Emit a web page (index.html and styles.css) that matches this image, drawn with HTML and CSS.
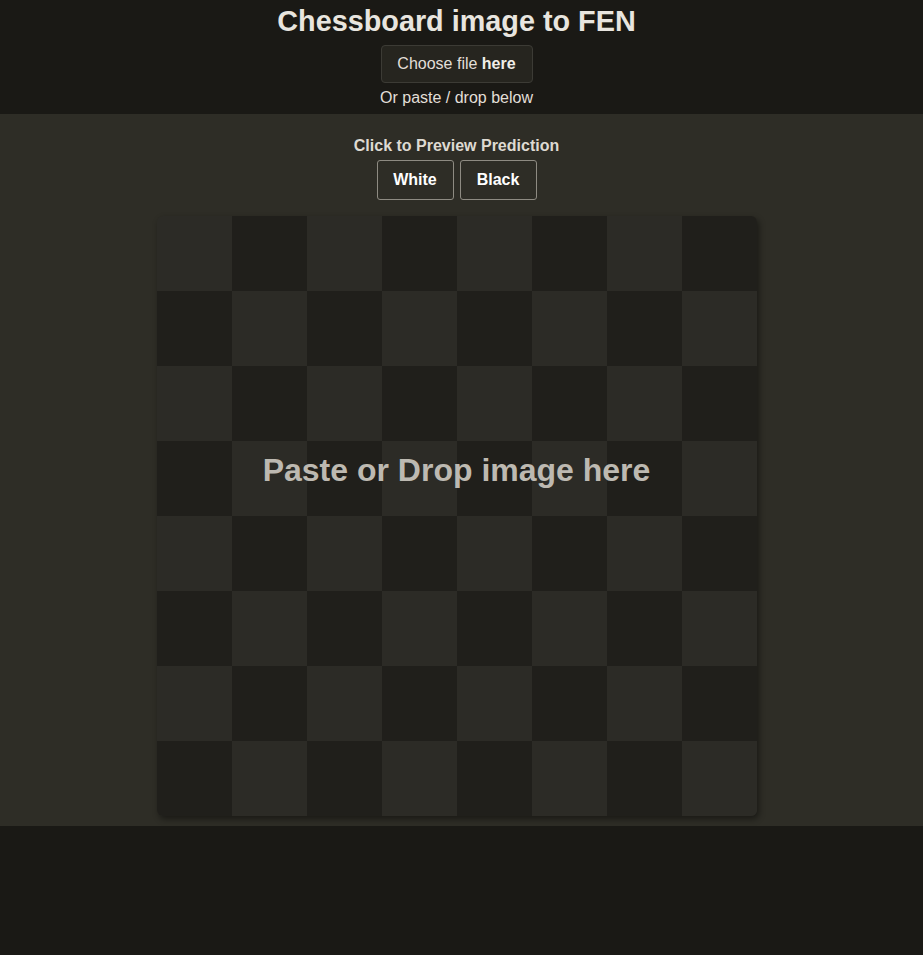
FILE: index.html
```html
<!DOCTYPE html>
<html>
<head>
<meta charset="utf-8">
<link rel="stylesheet" href="styles.css">
</head>
<body>
<header class="top">
  <h1 class="title">Chessboard image to FEN</h1>
  <button class="choose">Choose file <b>here</b></button>
  <div class="hint">Or paste / drop below</div>
</header>
<section class="main">
  <div class="preview-label">Click to Preview Prediction</div>
  <div class="side-buttons">
    <button class="side">White</button>
    <button class="side">Black</button>
  </div>
  <div class="board">
    <div class="sq l"></div><div class="sq d"></div><div class="sq l"></div><div class="sq d"></div><div class="sq l"></div><div class="sq d"></div><div class="sq l"></div><div class="sq d"></div>
    <div class="sq d"></div><div class="sq l"></div><div class="sq d"></div><div class="sq l"></div><div class="sq d"></div><div class="sq l"></div><div class="sq d"></div><div class="sq l"></div>
    <div class="sq l"></div><div class="sq d"></div><div class="sq l"></div><div class="sq d"></div><div class="sq l"></div><div class="sq d"></div><div class="sq l"></div><div class="sq d"></div>
    <div class="sq d"></div><div class="sq l"></div><div class="sq d"></div><div class="sq l"></div><div class="sq d"></div><div class="sq l"></div><div class="sq d"></div><div class="sq l"></div>
    <div class="sq l"></div><div class="sq d"></div><div class="sq l"></div><div class="sq d"></div><div class="sq l"></div><div class="sq d"></div><div class="sq l"></div><div class="sq d"></div>
    <div class="sq d"></div><div class="sq l"></div><div class="sq d"></div><div class="sq l"></div><div class="sq d"></div><div class="sq l"></div><div class="sq d"></div><div class="sq l"></div>
    <div class="sq l"></div><div class="sq d"></div><div class="sq l"></div><div class="sq d"></div><div class="sq l"></div><div class="sq d"></div><div class="sq l"></div><div class="sq d"></div>
    <div class="sq d"></div><div class="sq l"></div><div class="sq d"></div><div class="sq l"></div><div class="sq d"></div><div class="sq l"></div><div class="sq d"></div><div class="sq l"></div>
    <div class="drop-text">Paste or Drop image here</div>
  </div>
</section>
</body>
</html>
```

FILE: styles.css
```css
html, body {
  margin: 0;
  padding: 0;
  background: #1a1915;
  font-family: "Liberation Sans", Arial, sans-serif;
  color: #e6e3dc;
}
.top {
  display: flex;
  flex-direction: column;
  align-items: center;
  padding: 5px 10px 7px 0;
}
.title {
  margin: 0;
  font-size: 28.8px;
  line-height: 33px;
  font-weight: bold;
  color: #e8e5df;
}
.choose {
  margin-top: 7px;
  width: 152px;
  height: 38px;
  background: #26251f;
  border: 1px solid #3c3b35;
  border-radius: 4px;
  color: #e2dfd8;
  font-family: inherit;
  font-size: 16px;
  padding: 0;
}
.choose b { color: #f0eee8; }
.hint {
  margin-top: 6px;
  font-size: 16px;
  line-height: 18px;
  color: #e2dfd8;
}
.main {
  background: #2e2d26;
  display: flex;
  flex-direction: column;
  align-items: center;
  padding: 23px 10px 10px 0;
}
.preview-label {
  font-size: 16px;
  line-height: 18px;
  font-weight: bold;
  color: #dedad2;
}
.side-buttons {
  display: flex;
  gap: 6px;
  margin-top: 5px;
}
.side {
  width: 77px;
  height: 40px;
  background: transparent;
  border: 1px solid #8e8b82;
  border-radius: 3px;
  color: #ffffff;
  font-family: inherit;
  font-weight: bold;
  font-size: 16px;
  padding: 0;
}
.board {
  position: relative;
  margin-top: 16px;
  width: 600px;
  height: 600px;
  display: grid;
  grid-template-columns: repeat(8, 75px);
  grid-template-rows: repeat(8, 75px);
  border-radius: 6px;
  overflow: hidden;
  box-shadow: 2px 3px 6px rgba(0, 0, 0, 0.45);
}
.sq.l { background: #2c2b26; }
.sq.d { background: #201f1b; }
.drop-text {
  position: absolute;
  left: 0;
  right: 0;
  top: 236px;
  text-align: center;
  font-size: 32px;
  line-height: 37px;
  font-weight: bold;
  color: #bdb9b1;
}
```
